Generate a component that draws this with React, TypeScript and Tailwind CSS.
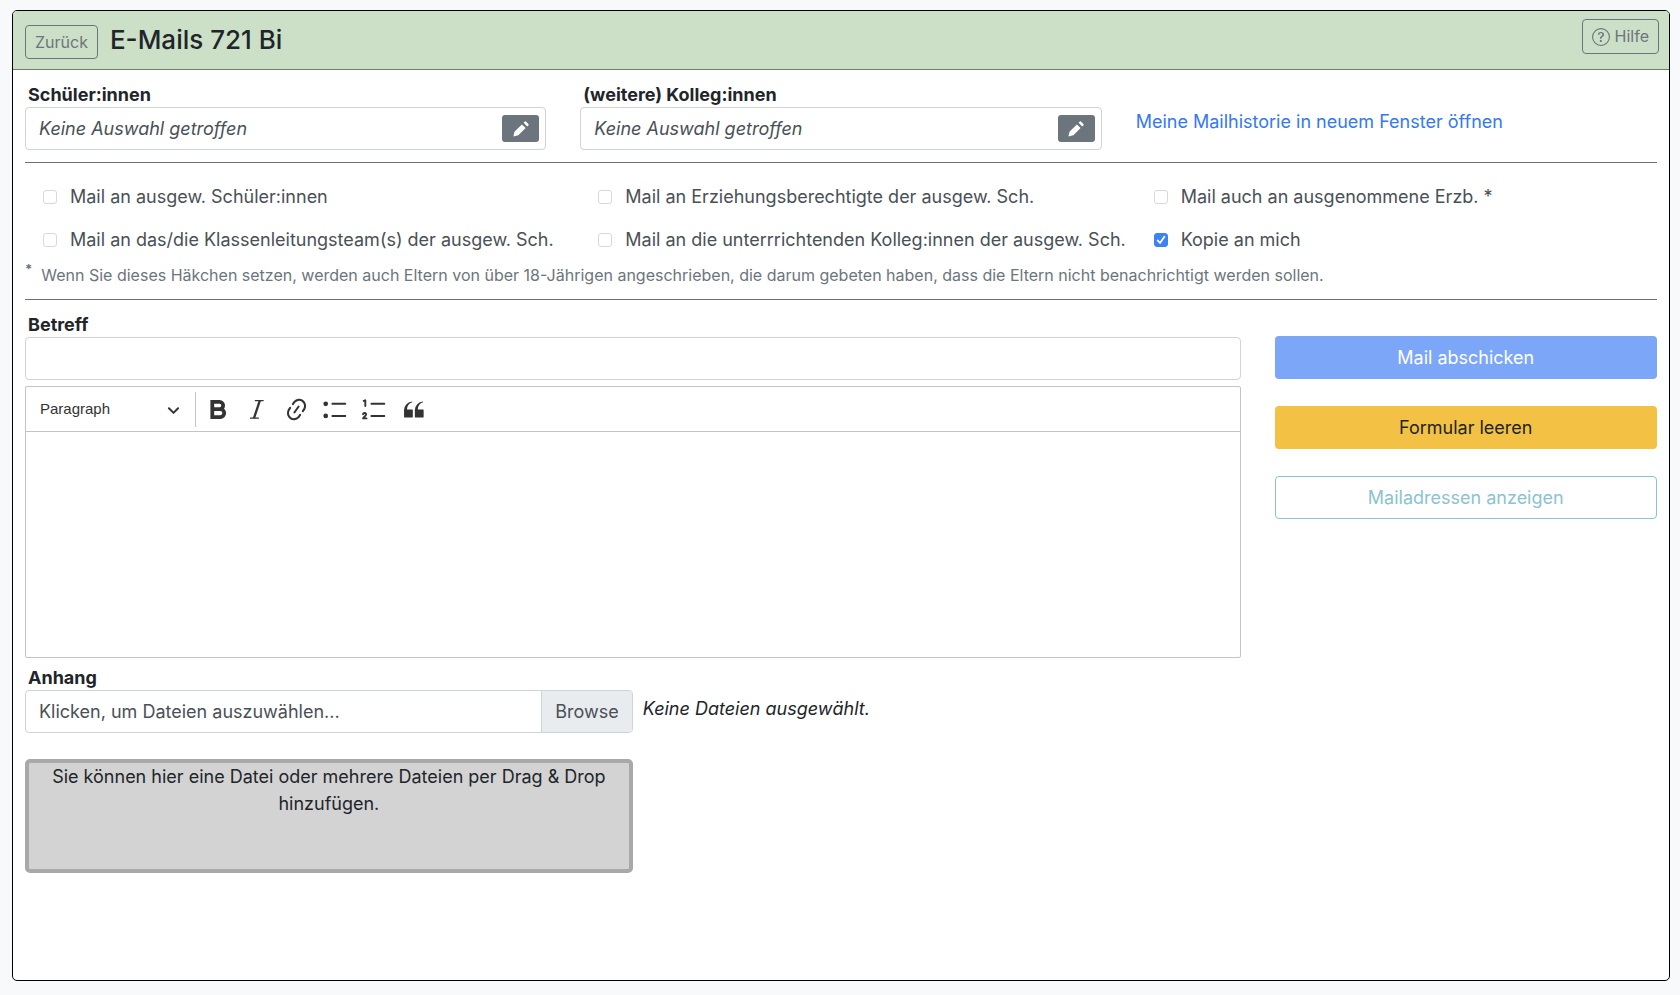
import React from 'react';
import { BsQuestionCircle } from 'react-icons/bs';

const recipients = [
  { id: 'students', label: 'Mail an ausgew. Schüler:innen', checked: false },
  { id: 'parents', label: 'Mail an Erziehungsberechtigte der ausgew. Sch.', checked: false },
  { id: 'excluded', label: 'Mail auch an ausgenommene Erzb. *', checked: false },
  { id: 'classTeam', label: 'Mail an das/die Klassenleitungsteam(s) der ausgew. Sch.', checked: false },
  { id: 'teachers', label: 'Mail an die unterrrichtenden Kolleg:innen der ausgew. Sch.', checked: false },
  { id: 'copy', label: 'Kopie an mich', checked: true },
];

function SelectionBox({ label }: { label: string }) {
  return (
    <div>
      <h2 className="pl-[3px] font-bold leading-6">{label}</h2>
      <div className="flex h-[43px] items-center justify-between rounded border border-[#ced4da] pl-[13px] pr-[6px]">
        <span className="italic text-[#495057]">Keine Auswahl getroffen</span>
        <button
          type="button"
          aria-label={`${label} bearbeiten`}
          className="flex h-[27px] w-[37px] items-center justify-center rounded-[3px] bg-[#6c757d] text-white"
        >
          <svg viewBox="0 0 16 16" className="size-4" fill="currentColor">
            <path d="M11.8.6a.8.8 0 0 1 1.1 0l2.5 2.5a.8.8 0 0 1 0 1.1l-1.2 1.2-3.6-3.6z" />
            <path d="m8.9 3.4 3.7 3.7-7 7a1 1 0 0 1-.4.25l-3.8 1a.6.6 0 0 1-.8-.8l.9-3.8a1 1 0 0 1 .2-.35z" />
          </svg>
        </button>
      </div>
    </div>
  );
}

function RecipientCheck({ id, label, checked }: { id: string; label: string; checked: boolean }) {
  return (
    <div className="flex h-[43px] items-center gap-[13px] pl-[18px]">
      <span className="grid">
        <input
          id={id}
          type="checkbox"
          defaultChecked={checked}
          className="peer col-start-1 row-start-1 size-[14px] appearance-none rounded-[3px] border border-[#d9d9d9] bg-white checked:border-[#3b82f7] checked:bg-[#3b82f7]"
        />
        <svg
          viewBox="0 0 14 14"
          className="pointer-events-none invisible col-start-1 row-start-1 size-[14px] peer-checked:visible"
          fill="none"
          stroke="white"
          strokeWidth="1.8"
          strokeLinecap="round"
          strokeLinejoin="round"
        >
          <path d="M3.6 7.4 6 10l4.4-6.2" />
        </svg>
      </span>
      <label htmlFor={id} className="whitespace-nowrap text-[#495057]">
        {label}
      </label>
    </div>
  );
}

function ToolButton({ label, children }: { label: string; children: React.ReactNode }) {
  return (
    <button type="button" aria-label={label} className="flex h-9 w-[38px] items-center justify-center">
      {children}
    </button>
  );
}

function EditorToolbar() {
  return (
    <div className="flex h-[45px] items-center border-b border-[#c4c4c4] text-[#333]">
      <button
        type="button"
        className="flex w-[169px] items-center justify-between pl-[14px] pr-[15px] font-['Liberation_Sans',Arial,sans-serif] text-[15px] leading-6"
      >
        Paragraph
        <svg viewBox="0 0 10 10" className="size-[13px]" fill="currentColor">
          <path d="M.941 4.523a.75.75 0 1 1 1.06-1.06l3.006 3.005 3.005-3.005a.75.75 0 1 1 1.06 1.06l-3.549 3.55a.75.75 0 0 1-1.168-.136L.941 4.523z" />
        </svg>
      </button>
      <span className="h-[35px] w-px bg-[#c4c4c4]" />
      <div className="flex gap-[1px] pl-[3px]">
        <ToolButton label="Bold">
          <svg viewBox="0 0 20 20" className="size-[27px]" fill="none" stroke="currentColor" strokeWidth="2.8">
            <path d="M5.4 9.7h5.4a2.65 2.65 0 0 0 0-5.3H5.4v11.2h5.9a2.95 2.95 0 0 0 0-5.9" />
          </svg>
        </ToolButton>
        <ToolButton label="Italic">
          <svg viewBox="0 0 20 20" className="size-[27px]" fill="none" stroke="currentColor" strokeLinecap="round">
            <path strokeWidth="1" d="M8.4 3.4h5.8M4.8 16.4h5.8" />
            <path strokeWidth="1.7" strokeLinecap="butt" d="M11.7 3.4 7.4 16.4" />
          </svg>
        </ToolButton>
        <ToolButton label="Link">
          <svg viewBox="0 0 20 20" className="size-[27px]" fill="currentColor">
            <path d="m11.077 15 .991-1.416a.75.75 0 1 1 1.229.86l-1.148 1.64a.748.748 0 0 1-.217.206 5.251 5.251 0 0 1-8.503-5.955.741.741 0 0 1 .12-.274l1.147-1.639a.75.75 0 1 1 1.228.86L4.933 10.7l.006.003a3.75 3.75 0 0 0 6.132 4.294l.006.004zm5.494-5.335a.748.748 0 0 1-.12.274l-1.147 1.639a.75.75 0 1 1-1.228-.86l.86-1.23a3.75 3.75 0 0 0-6.144-4.301l-.86 1.229a.75.75 0 0 1-1.229-.86l1.148-1.64a.748.748 0 0 1 .217-.206 5.251 5.251 0 0 1 8.503 5.955zm-4.563-2.532a.75.75 0 0 1 .184 1.045l-3.155 4.505a.75.75 0 1 1-1.229-.86l3.155-4.506a.75.75 0 0 1 1.045-.184z" />
          </svg>
        </ToolButton>
        <ToolButton label="Bulleted List">
          <svg viewBox="0 0 20 20" className="size-[27px]" fill="currentColor">
            <path d="M7 5.75c0 .414.336.75.75.75h9.5a.75.75 0 1 0 0-1.5h-9.5a.75.75 0 0 0-.75.75zm0 9c0 .414.336.75.75.75h9.5a.75.75 0 1 0 0-1.5h-9.5a.75.75 0 0 0-.75.75z" />
            <circle cx="2.75" cy="5.75" r="1.75" />
            <circle cx="2.75" cy="14.75" r="1.75" />
          </svg>
        </ToolButton>
        <ToolButton label="Numbered List">
          <svg viewBox="0 0 20 20" className="size-[27px]" fill="none" stroke="currentColor" strokeLinecap="round">
            <path strokeWidth="1.5" d="M7.75 5.75h9.5M7.75 14.75h9.5" />
            <path strokeWidth="1.4" strokeLinejoin="round" d="m2 3.7 1.2-.5v4.2M1.5 13.5c.2-1.2 2.4-1.2 2.3.2-.1.9-1.6 1.7-2.3 2.9h2.6" />
          </svg>
        </ToolButton>
        <ToolButton label="Block quote">
          <svg viewBox="0 0 20 20" className="size-[27px]" fill="currentColor">
            <path d="M3 10.423a6.5 6.5 0 0 1 6.056-6.408l.038.67C6.448 5.423 5.354 7.663 5.22 10H9c.552 0 .5.432.5.986v4.511c0 .554-.448.503-1 .503h-5c-.552 0-.5-.449-.5-1.003v-4.574zm8 0a6.5 6.5 0 0 1 6.056-6.408l.038.67c-2.646.739-3.74 2.979-3.873 5.315h3.779c.552 0 .5.432.5.986v4.511c0 .554-.448.503-1 .503h-5c-.552 0-.5-.449-.5-1.003v-4.574z" />
          </svg>
        </ToolButton>
      </div>
    </div>
  );
}

export default function App() {
  return (
    <div className="flex min-h-screen flex-col bg-[#f8f9fb] pb-[14px] pl-3 pr-[10px] pt-[10px] font-[Inter,sans-serif] text-[18px] leading-[27px] text-[#212529]">
      <main className="flex-1 rounded-[5px] border border-black bg-white">
        <header className="flex items-start justify-between rounded-t border-b border-[#6d7a6c] bg-[#cce0c8] pb-[10px] pl-3 pr-[10px] pt-2">
          <div className="flex items-start gap-3">
            <button
              type="button"
              className="mt-[6px] h-[34px] rounded border border-[#6c757d] px-[9px] text-[16px] text-[#6c757d]"
            >
              Zurück
            </button>
            <h1 className="pt-1 text-[26px] font-medium leading-[34px]">E-Mails 721 Bi</h1>
          </div>
          <button
            type="button"
            className="flex h-[35px] items-center gap-[5px] rounded border border-[#6c757d] px-[9px] text-[16px] text-[#6c757d]"
          >
            <BsQuestionCircle size={18} />
            Hilfe
          </button>
        </header>

        <div className="px-3 pt-[13px]">
          <section className="grid grid-cols-3 gap-x-[34px] border-b border-[#6f7274] pb-3">
            <SelectionBox label="Schüler:innen" />
            <SelectionBox label="(weitere) Kolleg:innen" />
            <a href="#mailhistorie" className="pt-[25px] text-[#3478f6]">
              Meine Mailhistorie in neuem Fenster öffnen
            </a>
          </section>

          <section className="border-b border-[#6f7274] pb-[10px] pt-3">
            <div className="grid grid-cols-3 gap-x-[34px]">
              {recipients.map((item) => (
                <RecipientCheck key={item.id} {...item} />
              ))}
            </div>
            <p className="flex gap-[9px] text-[16px] leading-7 text-[#6c757d]">
              <sup className="top-0 text-[13px] font-bold leading-4">*</sup>
              Wenn Sie dieses Häkchen setzen, werden auch Eltern von über 18-Jährigen angeschrieben, die darum
              gebeten haben, dass die Eltern nicht benachrichtigt werden sollen.
            </p>
          </section>

          <section className="grid grid-cols-4 gap-x-[34px] pt-3">
            <div className="col-span-3">
              <label htmlFor="subject" className="block pl-[3px] font-bold leading-[25px]">
                Betreff
              </label>
              <input
                id="subject"
                type="text"
                className="block h-[43px] w-full rounded border border-[#ced4da] px-3"
              />

              <div className="mt-[6px] rounded-[2px] border border-[#c4c4c4]">
                <EditorToolbar />
                <textarea aria-label="Nachricht" className="block h-[225px] w-full resize-none px-3 outline-none" />
              </div>

              <div className="grid grid-cols-2 pt-2">
                <div>
                  <label htmlFor="attachment" className="block pl-[3px] font-bold leading-6">
                    Anhang
                  </label>
                  <label
                    htmlFor="attachment"
                    className="flex h-[43px] items-stretch overflow-hidden rounded border border-[#ced4da] text-[#495057]"
                  >
                    <span className="flex flex-1 items-center pl-[13px]">Klicken, um Dateien auszuwählen...</span>
                    <span className="flex items-center border-l border-[#ced4da] bg-[#e9ecef] px-[13px]">Browse</span>
                  </label>
                  <input id="attachment" type="file" multiple className="sr-only" />
                </div>
                <p className="pl-[10px] pt-[29px] italic">Keine Dateien ausgewählt.</p>
                <div className="mt-[26px] h-[114px] rounded-[5px] border-4 border-[#a9a9a9] bg-[#d3d3d3] px-5 text-center">
                  Sie können hier eine Datei oder mehrere Dateien per Drag &amp; Drop hinzufügen.
                </div>
              </div>
            </div>

            <div className="flex flex-col gap-[27px] pt-6">
              <button type="button" className="h-[43px] rounded bg-[#7ca6f8] text-white">
                Mail abschicken
              </button>
              <button type="button" className="h-[43px] rounded bg-[#f3c143]">
                Formular leeren
              </button>
              <button type="button" className="h-[43px] rounded border border-[#8bc3d0] text-[#8bc3d0]">
                Mailadressen anzeigen
              </button>
            </div>
          </section>
        </div>
      </main>
    </div>
  );
}
